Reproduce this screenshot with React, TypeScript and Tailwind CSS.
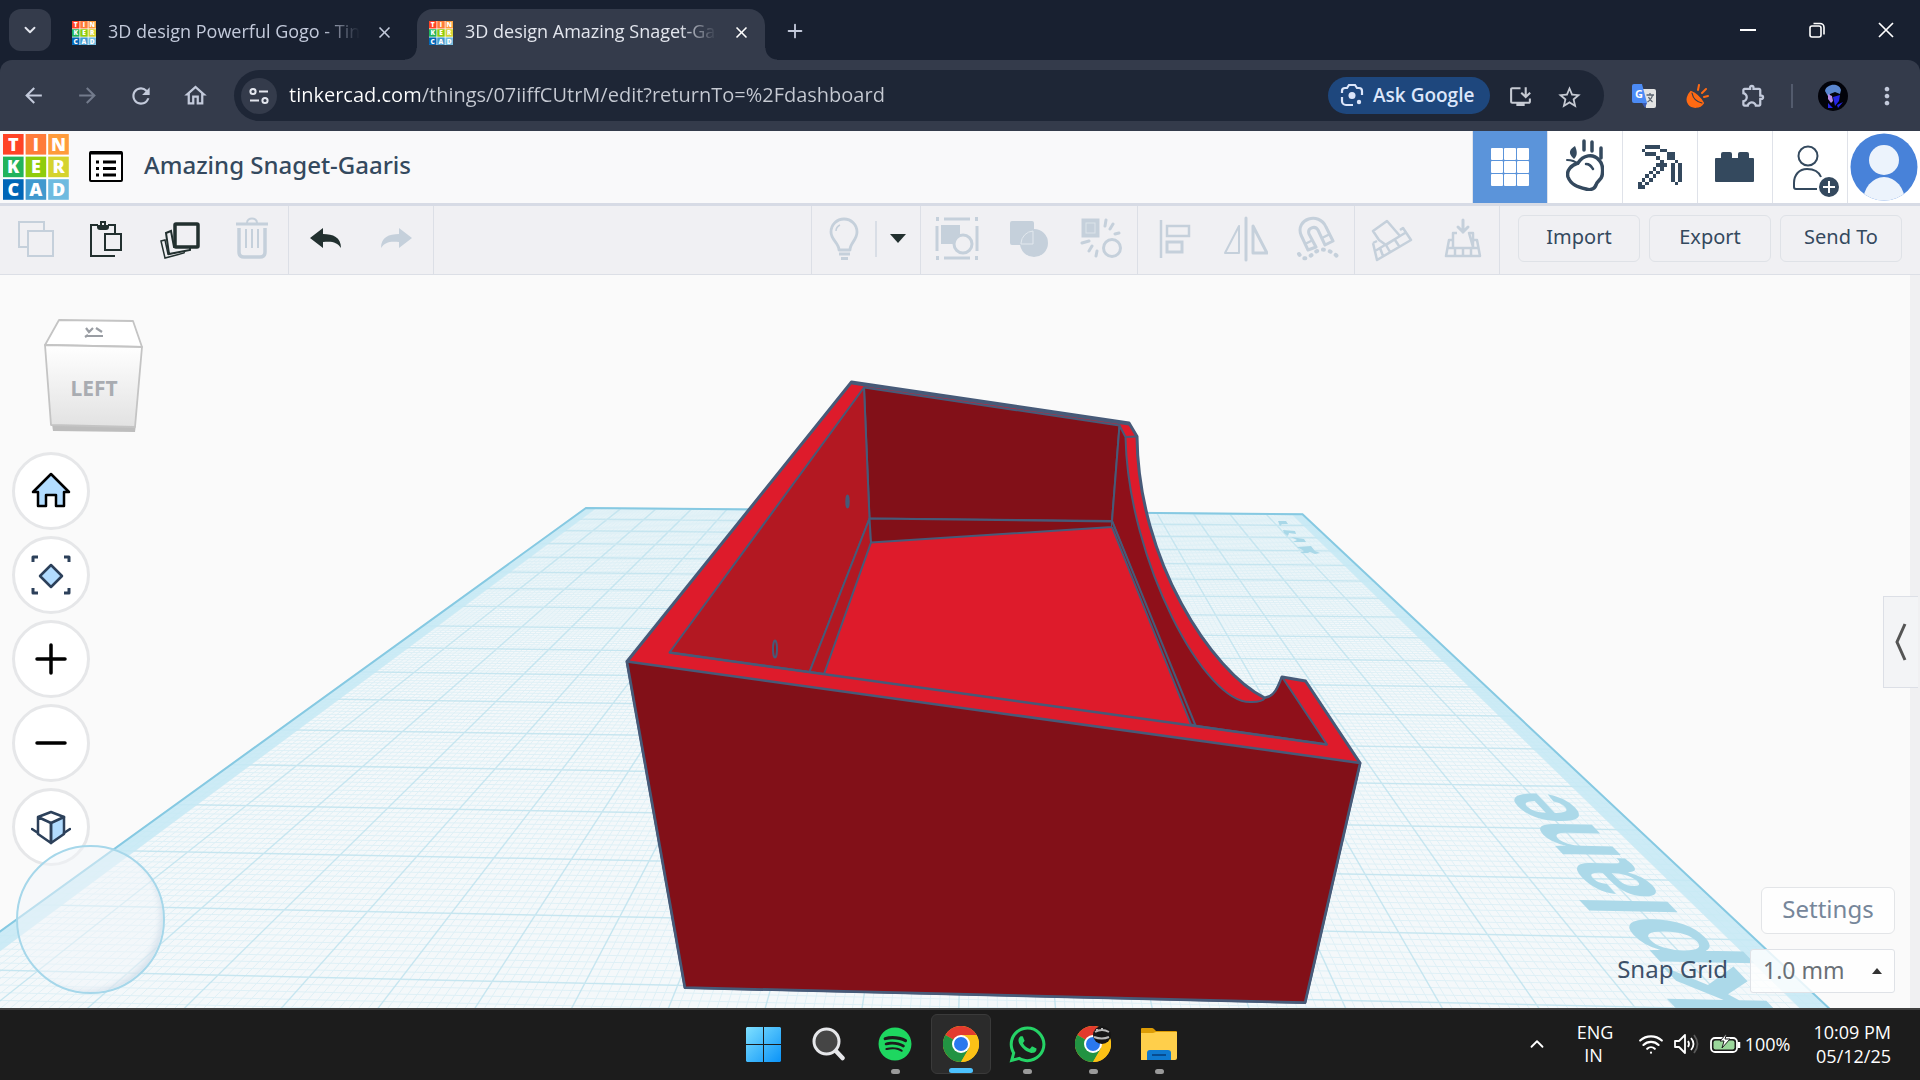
import type { ReactNode } from "react";
import { FaSpotify, FaWhatsapp } from "react-icons/fa";
import {
  MdArrowBack,
  MdArrowForward,
  MdClose,
  MdMoreVert,
  MdOutlineExtension,
  MdOutlineHome,
  MdOutlineInstallDesktop,
  MdRefresh,
  MdStarOutline,
} from "react-icons/md";
import { ChevronDown, ChevronUp, Plus, Wifi } from "lucide-react";

/* ---------- shared bits ---------- */

const LOGO = [
  ["T", "#ff4326"], ["I", "#ff7b3a"], ["N", "#ff9b3b"],
  ["K", "#21b35b"], ["E", "#8fcc0b"], ["R", "#d5d32e"],
  ["C", "#0066b7"], ["A", "#4199ce"], ["D", "#6fbbe0"],
];

function TinkerLogo({ className }: { className?: string }) {
  return (
    <svg viewBox="0 0 66 66" className={`overflow-visible ${className}`} role="img" aria-label="Tinkercad">
      <rect width="66" height="66" fill="#fff" />
      {LOGO.map(([letter, color], i) => {
        const x = (i % 3) * 22.6;
        const y = Math.floor(i / 3) * 22.6;
        return (
          <g key={letter}>
            <rect x={x} y={y} width="20.6" height="20.6" fill={color} />
            <text x={x + 10.3} y={y + 16.8} textAnchor="middle" fontSize="18" fontWeight="800" fontFamily="Open Sans, sans-serif" fill="#fff">
              {letter}
            </text>
          </g>
        );
      })}
    </svg>
  );
}

function IconButton({ label, className, children }: { label: string; className: string; children: ReactNode }) {
  return (
    <button type="button" aria-label={label} className={`grid shrink-0 place-items-center ${className}`}>
      {children}
    </button>
  );
}

/* ---------- browser chrome ---------- */

function Tab({ title, active }: { title: string; active?: boolean }) {
  return (
    <div className={`relative flex h-[51px] items-center pb-1 ${active ? "w-[348px] rounded-t-2xl bg-[#343b4b] pl-3" : "w-[344px] pl-[10px]"}`}>
      {active && (
        <>
          <span className="absolute bottom-0 -left-3 h-3 w-3 bg-[radial-gradient(circle_at_0_0,transparent_11px,#343b4b_12px)]" />
          <span className="absolute -right-3 bottom-0 h-3 w-3 bg-[radial-gradient(circle_at_100%_0,transparent_11px,#343b4b_12px)]" />
        </>
      )}
      <TinkerLogo className="h-6 w-6 shrink-0" />
      <span className={`ml-3 w-[252px] overflow-hidden pb-1 text-[18px] leading-7 whitespace-nowrap mask-r-from-85% ${active ? "text-[#e3e6ee]" : "text-[#c3cadb]"}`}>
        {title}
      </span>
      <IconButton label={`Close ${title}`} className={`ml-3 h-6 w-6 ${active ? "text-white" : "text-[#c3cadb]"}`}>
        <MdClose size={19} />
      </IconButton>
    </div>
  );
}

function TabStrip() {
  return (
    <div className="flex h-[60px] items-end bg-[#182030]">
      <IconButton label="Search tabs" className="mb-[9px] ml-[9px] h-[42px] w-[42px] rounded-xl bg-[#343b4b] text-[#e3e6ee]">
        <ChevronDown size={18} strokeWidth={2.5} />
      </IconButton>
      <div className="ml-[11px] flex gap-[11px]">
        <Tab title="3D design Powerful Gogo - Tinkercad" />
        <Tab title="3D design Amazing Snaget-Gaaris" active />
      </div>
      <IconButton label="New tab" className="ml-[18px] h-[51px] w-6 pb-2 text-[#c3cadb]">
        <Plus size={22} />
      </IconButton>
      <div className="ml-auto flex h-full text-white">
        <IconButton label="Minimize" className="w-[69px]">
          <svg viewBox="0 0 16 16" className="h-4 w-4"><path d="M0 8h16" stroke="currentColor" strokeWidth="2" /></svg>
        </IconButton>
        <IconButton label="Restore" className="w-[69px]">
          <svg viewBox="0 0 16 16" className="h-4 w-4" fill="none" stroke="currentColor" strokeWidth="1.6">
            <rect x="1" y="4" width="11" height="11" rx="2" />
            <path d="M4.500 1.500H11a4 4 0 0 1 4 4v7" />
          </svg>
        </IconButton>
        <IconButton label="Close" className="w-[69px]">
          <svg viewBox="0 0 16 16" className="h-4 w-4"><path d="M1 1l14 14M15 1L1 15" stroke="currentColor" strokeWidth="1.7" /></svg>
        </IconButton>
      </div>
    </div>
  );
}

function AddressBar() {
  return (
    <div className="flex h-[71px] items-center bg-[#182030]">
      <div className="flex h-full w-full items-center rounded-t-xl bg-[#343b4b] pr-[19px] pl-[6px]">
        <div className="flex text-[#c3cadb]">
          <IconButton label="Back" className="h-9 w-[54px]"><MdArrowBack size={25} /></IconButton>
          <IconButton label="Forward" className="h-9 w-[54px] text-[#737b8c]"><MdArrowForward size={25} /></IconButton>
          <IconButton label="Reload" className="h-9 w-[54px]"><MdRefresh size={26} /></IconButton>
          <IconButton label="Home" className="h-9 w-[54px]"><MdOutlineHome size={27} /></IconButton>
        </div>
        <div className="ml-3 flex h-[51px] flex-1 items-center rounded-full bg-[#1e2636] pr-6 pl-[7px]">
          <IconButton label="View site information" className="h-9 w-9 rounded-full bg-[#343b4b] text-[#e3e6ee]">
            <svg viewBox="0 0 20 20" className="h-5 w-5" fill="none" stroke="currentColor" strokeWidth="2">
              <circle cx="4" cy="5.500" r="2.600" />
              <path d="M10 5.500h9M1 14.500h9" />
              <circle cx="16" cy="14.500" r="2.600" />
            </svg>
          </IconButton>
          <input
            aria-label="Address and search bar"
            defaultValue="tinkercad.com/things/07iiffCUtrM/edit?returnTo=%2Fdashboard"
            className="ml-3 min-w-0 flex-1 bg-[linear-gradient(90deg,#ffffff_131px,#c6cad3_131px)] bg-clip-text pb-[2px] text-[20px] leading-7 text-transparent outline-none"
          />
          <button type="button" className="flex h-[37px] w-[162px] items-center gap-[9px] rounded-full bg-[#1e477d] pb-px pl-3 text-[19px] font-semibold whitespace-nowrap text-[#dce6fa]">
            <svg viewBox="0 0 24 24" className="h-6 w-6 shrink-0" fill="none" stroke="currentColor" strokeWidth="2.200">
              <path d="M2 10V8a3 3 0 0 1 3-3h2l2-3h6l2 3h2a3 3 0 0 1 3 3v4M2 14v4a4 4 0 0 0 4 4h7" />
              <circle cx="12" cy="12.500" r="3.500" fill="currentColor" stroke="none" />
              <circle cx="19" cy="19" r="2.200" fill="currentColor" stroke="none" />
            </svg>
            Ask Google
          </button>
          <div className="ml-[18px] flex gap-6 text-[#c6cad3]">
            <IconButton label="Install app" className="h-6 w-6"><MdOutlineInstallDesktop size={25} /></IconButton>
            <IconButton label="Bookmark this tab" className="h-6 w-6"><MdStarOutline size={27} /></IconButton>
          </div>
        </div>
        <IconButton label="Translate" className="ml-7 h-6 w-6">
          <svg viewBox="0 0 24 24" className="h-6 w-6 overflow-visible">
            <path d="M9 5h13a2 2 0 0 1 2 2v15a2 2 0 0 1-2 2h-8z" fill="#e3e3e3" />
            <path d="M2 0h8l5 19H2a2 2 0 0 1-2-2V2a2 2 0 0 1 2-2z" fill="#4c8bf5" />
            <path d="M10 19h5l-2 5z" fill="#3a5bb5" />
            <path d="M14.500 11H22M18 9v2m2.500 0c-.5 3-2 5-5 7m1-5c1 2 2 3.500 4 5" stroke="#5b6470" strokeWidth="1.300" fill="none" />
            <text x="7" y="14" textAnchor="middle" fontSize="11" fontWeight="700" fontFamily="Open Sans, sans-serif" fill="#fff">G</text>
          </svg>
        </IconButton>
        <IconButton label="Extension" className="ml-[30px] h-6 w-6">
          <svg viewBox="0 0 24 24" className="h-6 w-6" fill="none" stroke="#ff6a13" strokeLinecap="round" strokeWidth="2">
            <path d="M5 8c5 2 9 6 12 11-3 5-11 5-14 1S2 11 5 8z" fill="#ff6a13" />
            <path d="M6 9c1 5 5 9 10 10" stroke="#343b4b" strokeWidth="1.200" />
            <path d="M12 6l1-5M16 9l4-4M18 13l4-1" />
          </svg>
        </IconButton>
        <IconButton label="Extensions" className="ml-[29px] h-7 w-7 text-[#c3cadb]"><MdOutlineExtension size={27} /></IconButton>
        <span className="ml-6 h-6 w-[2px] shrink-0 bg-[#535b6d]" />
        <IconButton label="Profile" className="ml-6 h-8 w-8">
          <svg viewBox="0 0 32 32" className="h-8 w-8">
            <circle cx="16" cy="16" r="15" fill="#02030a" />
            <path d="M8 11c1-7 14-9 16-1l-1 4-5-2-5 2-1 4z" fill="#5a86cf" />
            <path d="M11 14l4 2 1 5-2 2-3-4z" fill="#b58ae6" />
            <path d="M16 17l7-2-1 6-4 5zM11 23l5 5h-5zM20 25l6-3-5 6z" fill="#2526e6" />
          </svg>
        </IconButton>
        <IconButton label="Chrome menu" className="ml-6 h-7 w-7 text-[#c3cadb]"><MdMoreVert size={28} /></IconButton>
      </div>
    </div>
  );
}

/* ---------- editor header ---------- */

const PICKAXE = [
  "..####......",
  ".#....##....",
  "..###...##..",
  ".....#..##..",
  "......#...#.",
  ".....###.#.#",
  "....#.#..#.#",
  "...#.#...#.#",
  "..#.#....#.#",
  ".#.#.....#.#",
  "#.#.......#.",
  "##..........",
];

function EditorHeader() {
  const cell = "w-[75px] border-l border-[#dfe2e9] bg-white text-[#34495e]";
  return (
    <header className="relative z-10 flex h-[72px] shrink-0 items-stretch bg-[#f9f9fa] shadow-[0_3px_0_#d7dbe5]">
      <a href="#home" className="ml-[3px] self-center"><TinkerLogo className="h-[66px] w-[66px]" /></a>
      <IconButton label="Design list" className="ml-5 w-[34px] pb-[2px]">
        <svg viewBox="0 0 34 31" className="h-[31px] w-[34px]">
          <rect x="1" y="1" width="32" height="29" rx="1" fill="#fff" stroke="#000" strokeWidth="2" />
          <path d="M1 2h32M7 11h3m4 0h13M7 17.500h3m4 0h13M7 24h3m4 0h13" stroke="#000" strokeWidth="3" />
        </svg>
      </IconButton>
      <h1 className="ml-[21px] self-center pb-1 font-[Noto_Sans] text-[24px] font-medium text-[#34495e]">Amazing Snaget-Gaaris</h1>
      <nav className="ml-auto flex" aria-label="Workspaces">
        <IconButton label="3D design" className="w-[75px] border-l border-[#dfe2e9] bg-[#5b94da]">
          <svg viewBox="0 0 38 38" className="h-[38px] w-[38px]" fill="#fff">
            {[0, 13, 26].map((y) => [0, 13, 26].map((x) => <rect key={`${x}-${y}`} x={x} y={y} width="12" height="12" rx="1" />))}
          </svg>
        </IconButton>
        <IconButton label="Sim lab" className={`${cell} pb-1`}>
          <svg viewBox="0 0 38 52" className="h-[52px] w-[38px]" fill="none" stroke="currentColor" strokeLinecap="round" strokeWidth="3.500">
            <path d="M12 24c5-8 15-10 21-3 4 4 4 11 3 16-1 4-5 5-6 9-2 5-7 5-10 4C12 48 5 46 2 38c-2-6 3-12 10-14z" />
            <path d="M20 25c4 0 5 2 7 5" strokeWidth="2.500" />
            <path d="M18 2v9M26 3v9M35 9v10" />
            <path d="M1 21c5 0 8 1 11 4" strokeWidth="2" />
            <path d="M8 20C1 14 4 10 9 7c2 5 3 9-1 13z" fill="currentColor" stroke="none" />
          </svg>
        </IconButton>
        <IconButton label="Blocks" className={cell}>
          <svg viewBox="0 0 12 12" className="h-11 w-11" fill="currentColor" shapeRendering="crispEdges">
            {PICKAXE.map((row, y) => [...row].map((c, x) => c === "#" && <rect key={`${x}-${y}`} x={x} y={y} width="1" height="1" />))}
          </svg>
        </IconButton>
        <IconButton label="Bricks" className={cell}>
          <svg viewBox="0 0 40 30" className="h-[30px] w-10" fill="currentColor">
            <path d="M0 7q0-1 1-1h5V2q0-2 2-2h7q2 0 2 2v4h6V2q0-2 2-2h7q2 0 2 2v4h4q1 0 1 1v22q0 1-1 1H1q-1 0-1-1z" />
          </svg>
        </IconButton>
        <IconButton label="Invite people" className={`${cell} pt-2 pl-3`}>
          <svg viewBox="0 0 48 54" className="h-[54px] w-12" fill="none" stroke="currentColor" strokeWidth="2">
            <circle cx="16" cy="12" r="9.500" />
            <path d="M25 45H4q-2 0-2-2v-4c0-8 5-14 13-14 7 0 12 3 14 8" />
            <circle cx="37" cy="43" r="10" fill="currentColor" stroke="none" />
            <path d="M37 37v12M31 43h12" stroke="#fff" />
          </svg>
        </IconButton>
        <IconButton label="Account" className="w-[73px] border-l border-[#dfe2e9] bg-white">
          <svg viewBox="0 0 68 68" className="h-[68px] w-[68px]">
            <clipPath id="avatar"><circle cx="34" cy="34" r="33.500" /></clipPath>
            <g clipPath="url(#avatar)">
              <rect width="68" height="68" fill="#4882d9" />
              <circle cx="34" cy="27" r="15" fill="#ecf3fc" />
              <ellipse cx="34" cy="69" rx="21" ry="25" fill="#ecf3fc" />
            </g>
          </svg>
        </IconButton>
      </nav>
    </header>
  );
}

/* ---------- toolbar ---------- */

const DARK = "#22302f";
const PALE = "#c5d0db";

function Tool({ label, children }: { label: string; children: ReactNode }) {
  return (
    <IconButton label={label} className="h-full w-[72px]">
      <svg viewBox="0 0 44 46" className="h-[46px] w-11" fill="none" stroke={PALE} strokeWidth="2">
        {children}
      </svg>
    </IconButton>
  );
}

function Toolbar() {
  const group = "flex h-full items-center border-r border-[#dcdfe6]";
  const action = "h-[47px] w-[122px] rounded-md border border-[#dfe2e7] pb-1 font-[Noto_Sans] text-[20px] text-[#34495e]";
  return (
    <div className="flex h-[72px] shrink-0 items-center border-b border-[#dcdfe6] bg-[#f0f0f3]">
      <div className={group}>
        <Tool label="Copy">
          <path d="M13 31H5V6h25v8" />
          <rect x="14" y="15" width="25" height="25" />
        </Tool>
        <Tool label="Paste">
          <path d="M29 40H5V9h7m10 0h7v9" stroke={DARK} />
          <path d="M11 9h12v2q0 3-3 3h-6q-3 0-3-3z" fill={DARK} stroke="none" />
          <rect x="15" y="6" width="4" height="4" stroke={DARK} fill="#f0f0f3" />
          <rect x="19" y="18" width="16" height="16" stroke={DARK} fill="#f0f0f3" />
        </Tool>
        <Tool label="Duplicate">
          <g stroke={DARK} fill="#f0f0f3">
            <path d="M3 25l4-1 3 14 17-4-1 3-19 5z" strokeWidth="1.500" />
            <path d="M8 17l5-2 3 16 16-1v4l-21 4z" />
            <rect x="17" y="8" width="23" height="23" rx="1" strokeWidth="3.500" />
          </g>
        </Tool>
        <Tool label="Delete">
          <path d="M6 8h32" strokeWidth="3" />
          <path d="M17 7c0-6 10-6 10 0" />
          <path d="M9 12v24q0 5 5 5h16q5 0 5-5V12" strokeWidth="3.500" />
          <path d="M16 13v19m6-19v19m6-19v19" />
        </Tool>
      </div>
      <div className={group}>
        <Tool label="Undo">
          <path d="M7 22L20 12v6c10 0 18 3 18 14-4-6-9-7-18-6v6z" fill={DARK} stroke="none" />
        </Tool>
        <Tool label="Redo">
          <path d="M37 22L24 12v6C14 18 6 21 6 32c4-6 9-7 18-6v6z" fill={PALE} stroke="none" />
        </Tool>
      </div>
      <div className={`${group} ml-auto w-[110px] border-l`}>
        <IconButton label="Visibility" className="ml-4 h-full w-8">
          <svg viewBox="0 0 32 46" className="h-[46px] w-8" fill="none" stroke={PALE} strokeWidth="2.800">
            <path d="M11 34c0-7-8-10-8-18a13 13 0 0 1 26 0c0 8-7 11-7 18z" strokeLinejoin="round" />
            <path d="M8 15c0-3 2-5 4-6" strokeWidth="1.500" />
            <path d="M11 38h11M13 42.500h7" />
          </svg>
        </IconButton>
        <span className="ml-[15px] h-9 w-[2px] bg-[#d9dee6]" />
        <IconButton label="Visibility options" className="ml-[7px] h-full w-7">
          <svg viewBox="0 0 16 9" className="h-[9px] w-4" fill={DARK}><path d="M0 0h16L8 9z" /></svg>
        </IconButton>
      </div>
      <div className={group}>
        <Tool label="Group">
          <path d="M9 3h26M9 42h26M2 10v25M42 10v25" strokeWidth="3" />
          <path d="M1 3h3m36 0h3M1 42h3m36 0h3" strokeWidth="4" />
          <rect x="7" y="10" width="17" height="17" fill={PALE} />
          <circle cx="28" cy="28" r="9" fill="#f0f0f3" strokeWidth="3" />
        </Tool>
        <Tool label="Union">
          <rect x="4" y="6" width="22" height="22" rx="1" fill={PALE} />
          <circle cx="27" cy="27" r="13" fill={PALE} />
          <path d="M14 27a13 13 0 0 1 12-12v13H14z" stroke="#e2e8ee" strokeWidth="1" />
        </Tool>
        <Tool label="Ungroup">
          <rect x="4" y="4" width="15" height="16" fill={PALE} strokeWidth="3" />
          <rect x="7" y="7" width="9" height="10" stroke="#dce3ea" strokeWidth="1" />
          <circle cx="33" cy="32" r="8.500" strokeWidth="3" />
          <path d="M27 4l-1 6m8-2l-3 5m9 4l-4 1M3 27l7-2m3 5l-3 5m8 0l-1 5" strokeWidth="3" strokeLinecap="round" />
        </Tool>
      </div>
      <div className={group}>
        <Tool label="Align">
          <path d="M9 4v38" strokeWidth="2.500" />
          <rect x="15" y="10" width="22" height="10" strokeWidth="2.500" />
          <rect x="15" y="26" width="15" height="10" strokeWidth="3" />
        </Tool>
        <Tool label="Mirror">
          <path d="M22 2v42" strokeWidth="3" strokeLinecap="round" />
          <path d="M15 10v27H1z" strokeLinejoin="round" />
          <path d="M29 10v27h14z" strokeWidth="3" strokeLinejoin="round" />
        </Tool>
        <Tool label="Cruise">
          <path d="M12 34L5 19C-1 3 23-5 30 11l7 14-8 4-7-15c-3-5-11-2-9 4l7 13z" strokeWidth="3" strokeLinejoin="round" />
          <path d="M9 28l8-4M26 22l8-4" strokeWidth="2.500" />
          <path d="M3 38c5 8 10 3 15-1s12-6 23 3" strokeWidth="4" strokeLinecap="round" strokeDasharray="1 6" />
        </Tool>
      </div>
      <div className={group}>
        <Tool label="Workplane">
          <path d="M4 15L18 5l13 15-14 9-7-5zM4 27l4-2M31 14l3-2 8 12-34 20-4-17M6 35l30-18M17 29l4 7m5-12l4 6M11 32l3 8" strokeWidth="2.500" strokeLinejoin="round" />
        </Tool>
        <Tool label="Drop to workplane">
          <path d="M22 4v12m-5-5l5 5 5-5" strokeWidth="3" strokeLinecap="round" />
          <path d="M12 31V17h4m12 0h4v14zM12 24H8L5 40h34l-3-16h-4M7 32h30M14 32v8m8-8v8m8-8v8" strokeWidth="2.500" strokeLinejoin="round" />
        </Tool>
      </div>
      <div className="flex gap-[9px] px-[18px]">
        <button type="button" className={action}>Import</button>
        <button type="button" className={action}>Export</button>
        <button type="button" className={action}>Send To</button>
      </div>
    </div>
  );
}

/* ---------- 3D scene ---------- */

// Unit square -> screen quad. Scene units are grid cells (10 mm), u across, k towards the viewer.
const [P0, P1, P2, P3] = [[586, 508], [1302.5, 514.3], [1832.4, 1011.4], [-51.8, 969]];
const DX1 = P1[0] - P2[0], DX2 = P3[0] - P2[0], DX3 = P0[0] - P1[0] + P2[0] - P3[0];
const DY1 = P1[1] - P2[1], DY2 = P3[1] - P2[1], DY3 = P0[1] - P1[1] + P2[1] - P3[1];
const DET = DX1 * DY2 - DX2 * DY1;
const G = (DX3 * DY2 - DX2 * DY3) / DET;
const H = (DX1 * DY3 - DX3 * DY1) / DET;

function project(u: number, k: number) {
  const s = u / 20;
  const t = k / 17;
  const w = G * s + H * t + 1;
  return [
    ((P1[0] - P0[0] + G * P1[0]) * s + (P3[0] - P0[0] + H * P3[0]) * t + P0[0]) / w,
    ((P1[1] - P0[1] + G * P1[1]) * s + (P3[1] - P0[1] + H * P3[1]) * t + P0[1]) / w,
  ];
}

const pt = (u: number, k: number) => project(u, k).map((n) => n.toFixed(1)).join(" ");
const poly = (...pts: number[][]) => `M${pts.map(([u, k]) => pt(u, k)).join("L")}Z`;
const NEAR = 19.5;

const range = (n: number) => Array.from({ length: n }, (_, i) => i);
const gridPath = (step: number, cols: number, rows: number) =>
  range(cols).map((i) => `M${pt(i * step, 0)}L${pt(i * step, NEAR)}`).join("") +
  range(rows).map((i) => `M${pt(0, i * step)}L${pt(20, i * step)}`).join("");

const MINOR = gridPath(0.1, 200, 195);
const MAJOR = gridPath(1, 20, 20);

// letter, pen position along the edge, advance in em
const LABEL: [string, number, number][] = [
  ["k", 17.14, 0.556], ["p", 16.44, 0.611], ["l", 15.66, 0.278],
  ["a", 15.34, 0.556], ["n", 14.62, 0.611], ["e", 13.88, 0.556],
];

function PlaneLetter({ char, k, advance }: { char: string; k: number; advance: number }) {
  const em = 1.32;
  const u = 19.42;
  const [ox, oy] = project(u, k);
  const mid = k - (advance * em) / 2;
  const [ax, ay] = project(u - 0.35, mid + 0.25);
  const [bx, by] = project(u - 0.35, mid - 0.25);
  const [cx, cy] = project(u - 0.7, mid);
  const [dx, dy] = project(u, mid);
  const a = ((bx - ax) / 0.5) * em, b = ((by - ay) / 0.5) * em;
  const c = ((dx - cx) / 0.7) * 1.42, d = ((dy - cy) / 0.7) * 1.42;
  const m = [a, b, c, d].map((n) => n / 100);
  return (
    <text transform={`matrix(${m.join(" ")} ${ox} ${oy})`} fontSize="100" fontWeight="700" fontFamily="Liberation Sans, sans-serif" fill="#acd9e9">
      {char}
    </text>
  );
}

function Scene() {
  return (
    <svg viewBox="0 275 1920 733" preserveAspectRatio="xMidYMid slice" className="absolute inset-0 h-full w-full" aria-hidden>
      <path d={poly([0, 0], [20, 0], [20, NEAR], [0, NEAR])} fill="#f4f8fa" />
      <path d={MINOR} stroke="#a9dcec" strokeWidth="1" opacity=".28" />
      <path d={MAJOR} stroke="#a3d6e6" strokeWidth="1.500" opacity=".42" fill="none" />
      <path d={poly([0, 0], [0.3, 0.1], [0.3, NEAR], [0, NEAR])} fill="#c6e9f4" opacity=".85" />
      <path d={poly([20, 0], [19.7, 0.1], [19.7, NEAR], [20, NEAR])} fill="#c6e9f4" opacity=".85" />
      <path d={poly([0, 0], [20, 0], [19.7, 0.1], [0.3, 0.1])} fill="#c6e9f4" />
      <path d={poly([0, 0], [20, 0], [20, NEAR], [0, NEAR])} fill="none" stroke="#86c9e2" strokeWidth="2" />
      {LABEL.map(([char, k, advance]) => (
        <PlaneLetter key={char} char={char} k={k} advance={advance} />
      ))}
      <path d="M1278 521h8l2 3h-6l-2 2zM1283 530l12 1 1 3-7-1-1 3-4-3zM1291 537l13 2 2 3h-13l4-2zM1297 547l14-1 4 5 5 2-5 1-5-2-2 1h-8l4-2z" fill="#a9d8e8" />

      <g stroke="#475a78" strokeWidth="2" strokeLinejoin="round">
        <path d="M627 661.500L851.500 382L1129 423L1137 436.500C1138 560 1212 672 1264.800 698C1274 697 1278 688 1282 677L1305.500 681L1360 763L1305 1002.500L685 987.500z" fill="#de1b2b" strokeWidth="3" />
        <path d="M864 387.500L1119.500 425.500L1112 521L869.500 518.500z" fill="#821018" />
        <path d="M864 387.500L669.500 652.500L809.500 672L869.500 518.500z" fill="#b31822" />
        <path d="M869.500 518.500L871 542.500L824 674L809.500 672z" fill="#b31822" />
        <path d="M869.500 518.500L1112 521.500V527L871 542.500z" fill="#821018" />
        <path d="M1119.500 425.500L1125.500 437C1128 560 1205 706 1252 702C1260 702 1263 701 1265 698C1274 697 1278 688 1282 677L1327 744.500L1194 725.500L1112 521z" fill="#8f101a" />
        <path d="M1112 527L1191 724.500L1195.500 725.500L1112 521" fill="#8f101a" />
        <path d="M1125.500 437L1137 436.500" fill="none" />
        <path d="M669.500 652.500L1327 744.500" fill="none" strokeWidth="2.500" />
        <path d="M627 661.500L1360 763L1305 1002.500L685 987.500z" fill="#821018" strokeWidth="2.500" />
        <path d="M852 383L1129 424" fill="none" strokeWidth="3" />
        <ellipse cx="847.500" cy="501.500" rx="1.200" ry="6" fill="#475a78" />
        <ellipse cx="775" cy="649" rx="2" ry="8.500" fill="#a01620" />
      </g>
    </svg>
  );
}

function ViewCube() {
  return (
    <svg viewBox="0 0 104 116" className="ml-10 h-[116px] w-[104px]" role="img" aria-label="View cube">
      <defs>
        <linearGradient id="face" x1="0" y1="0" x2="0" y2="1">
          <stop offset="0" stopColor="#fff" />
          <stop offset="1" stopColor="#e2e2e2" />
        </linearGradient>
      </defs>
      <path d="M12 106h84l-1 8-82-1z" fill="#bdbdbd" />
      <g stroke="#c4c4c4" strokeWidth="1.800" strokeLinejoin="round">
        <path d="M19 2l74 1 9 26-97-2z" fill="#fff" />
        <path d="M5 27l97 2-7 80-84-2z" fill="url(#face)" />
      </g>
      <path d="M46 18h17M45 19l3-2M46 10l3 4 4-4m3 0l6 4" stroke="#999da3" strokeWidth="2.200" fill="none" />
      <text x="54" y="78" textAnchor="middle" fontSize="21" fontWeight="700" fontFamily="Noto Sans, sans-serif" fill="#a9acb1">LEFT</text>
    </svg>
  );
}

function ViewButton({ label, children }: { label: string; children: ReactNode }) {
  return (
    <IconButton label={label} className="h-[78px] w-[78px] rounded-full border-[3px] border-[#e6e7e9] bg-white">
      <svg viewBox="0 0 40 40" className="h-10 w-10" fill="none" stroke="#2c405a" strokeWidth="2.500" strokeLinecap="round" strokeLinejoin="round">
        {children}
      </svg>
    </IconButton>
  );
}

function Viewport() {
  return (
    <main className="relative flex min-h-0 flex-1 justify-between overflow-hidden bg-[#fafafa] font-[Noto_Sans]">
      <Scene />
      <div className="relative flex flex-col pt-[43px]">
        <ViewCube />
        <div className="mt-[18px] ml-3 flex flex-col gap-[6px]">
          <ViewButton label="Home view">
            <path d="M20 3L2 21h5v14h8V24h10v11h8V21h5z" fill="#b2dcff" stroke="#000" />
          </ViewButton>
          <ViewButton label="Fit all in view">
            <path d="M20 10l11 11-11 11L9 21z" fill="#b2dcff" />
            <path d="M2 7V2h5M33 2h5v5M38 33v5h-5M7 38H2v-5" strokeWidth="3" strokeLinecap="butt" />
          </ViewButton>
          <ViewButton label="Zoom in"><path d="M6 20h28M20 6v28" stroke="#000" strokeWidth="3.500" /></ViewButton>
          <ViewButton label="Zoom out"><path d="M6 20h28" stroke="#000" strokeWidth="3.500" /></ViewButton>
          <ViewButton label="Orthographic view">
            <path d="M20 16l13-6v17l-13 9z" fill="#b2dcff" />
            <path d="M20 16L7 10l13-5 13 5M7 10v17l13 9V16M1 22l6 4m26 0l6-4" />
          </ViewButton>
        </div>
      </div>
      {/* orbit pad */}
      <div className="absolute bottom-[14px] left-4 h-[149px] w-[149px] rounded-full border-2 border-[#a6d7ea] bg-[#f1f6f9]/50 shadow-[inset_-7px_-5px_5px_-4px_#cfdde8aa]" />

      <aside className="relative flex w-[310px] flex-col items-end">
        <div className="absolute inset-y-0 right-0 w-[10px] bg-[#f0f0f2]" />
        <button type="button" aria-label="Show shapes panel" className="relative mt-[321px] mr-[2px] grid h-[92px] w-[35px] place-items-center border border-r-0 border-[#dcdfe6] bg-[#f3f4f6]">
          <svg viewBox="0 0 12 38" className="h-[38px] w-3" fill="none" stroke="#555" strokeWidth="3"><path d="M10 1L2 19l8 18" /></svg>
        </button>
        <button type="button" className="relative mt-auto mr-[25px] h-[47px] w-[134px] rounded-md border border-[#e3e5e8] bg-white/80 pb-1 text-[24px] leading-8 text-[#76869a]">
          Settings
        </button>
        <div className="relative mt-[15px] mr-[25px] mb-[15px] flex items-center">
          <label htmlFor="snap" className="mr-[22px] pb-1 text-[24px] leading-8 text-[#3d5068]">Snap Grid</label>
          <select id="snap" className="h-11 w-[145px] appearance-none rounded-[3px] border border-[#dfe2e7] bg-white/80 pb-[2px] pl-3 text-[23px] text-[#6a7076]">
            <option>1.0 mm</option>
          </select>
          <svg viewBox="0 0 10 6" className="pointer-events-none absolute right-[13px] h-[6px] w-[10px]" fill="#333"><path d="M5 0l5 6H0z" /></svg>
        </div>
      </aside>
    </main>
  );
}

/* ---------- taskbar ---------- */

function ChromeMark({ badge }: { badge?: boolean }) {
  return (
    <svg viewBox="0 0 36 36" className="h-9 w-9">
      <circle cx="18" cy="18" r="18" fill="#fbc116" />
      <path d="M18 18L2.400 9A18 18 0 0 1 33.600 9z" fill="#e33b2e" />
      <path d="M18 9h15.600L26 22.500z" fill="#fbc116" />
      <path d="M2.400 9A18 18 0 0 0 18 36l8-13.500-8-4.500z" fill="#229342" />
      <path d="M25.800 22.500L18 36a18 18 0 0 0 15.600-27H18z" fill="#fbc116" />
      <circle cx="18" cy="18" r="9" fill="#fff" />
      <circle cx="18" cy="18" r="7" fill="#2a78ee" />
      {badge && (
        <>
          <circle cx="27" cy="9" r="9" fill="#161616" />
          <path d="M20 6q7-4 14 0M19 11q8 3 15 0M22 3v3m5-4v3" stroke="#b9b9b9" strokeWidth="2" fill="none" />
        </>
      )}
    </svg>
  );
}

function TaskIcon({ label, running, active, children }: { label: string; running?: boolean; active?: boolean; children: ReactNode }) {
  return (
    <button
      type="button"
      aria-label={label}
      className={`relative grid h-[60px] w-[60px] place-items-center rounded-md ${active ? "border border-[#3a3a3a] bg-[#2b2b2b]" : ""}`}
    >
      {children}
      {(running || active) && (
        <span className={`absolute bottom-0 h-[5px] rounded-full ${active ? "w-6 bg-[#4cc2ff]" : "w-[9px] bg-[#9a9a9a]"}`} />
      )}
    </button>
  );
}

function Taskbar() {
  return (
    <footer className="grid h-[72px] shrink-0 grid-cols-[1fr_auto_1fr] items-center border-t-2 border-[#3f3f3f] bg-[#1c1c1c] pb-[2px] text-[18px] leading-6 text-white">
      <div />
      <div className="flex gap-[6px] pl-[2px]">
        <TaskIcon label="Start">
          <svg viewBox="0 0 35 35" className="h-[35px] w-[35px]">
            <linearGradient id="win" x1="0" y1="0" x2="1" y2="1">
              <stop offset="0" stopColor="#7fe0ff" />
              <stop offset="1" stopColor="#0a93f8" />
            </linearGradient>
            <path d="M1 0h16v17H0V1zM18 0h16l1 1v16H18zM0 18h17v17H1l-1-1zM18 18h17v16l-1 1H18z" fill="url(#win)" />
          </svg>
        </TaskIcon>
        <TaskIcon label="Search">
          <svg viewBox="0 0 34 34" className="h-[34px] w-[34px]" stroke="#e6e7ea" strokeLinecap="round">
            <path d="M23 23l7.500 8" strokeWidth="4.500" />
            <circle cx="14.500" cy="14.500" r="12.500" fill="#454545" strokeWidth="3" />
          </svg>
        </TaskIcon>
        <TaskIcon label="Spotify" running><FaSpotify size={34} color="#1ed760" /></TaskIcon>
        <TaskIcon label="Google Chrome" active><ChromeMark /></TaskIcon>
        <TaskIcon label="WhatsApp" running><FaWhatsapp size={41} color="#25d366" /></TaskIcon>
        <TaskIcon label="Google Chrome, second profile" running><ChromeMark badge /></TaskIcon>
        <TaskIcon label="File Explorer" running>
          <svg viewBox="0 0 36 32" className="h-8 w-9">
            <path d="M0 10V1q0-1 1-1h10q1 0 2 1l2 2h20q1 0 1 1v6z" fill="#dd9c05" />
            <path d="M0 5h12l3-1h21v26q0 2-2 2H0z" fill="#ffcf4b" />
            <path d="M6 32v-7q0-3 3-3h18q3 0 3 3v7z" fill="#0f79cf" />
            <path d="M11 27h14" stroke="#074b8f" strokeWidth="2" />
          </svg>
        </TaskIcon>
      </div>
      <div className="flex items-center justify-end pr-[29px]">
        <ChevronUp size={22} />
        <div className="ml-[29px] w-[34px] text-center leading-[23px]">ENG<br />IN</div>
        <Wifi size={26} className="ml-[27px]" />
        <svg viewBox="0 0 26 22" className="ml-[10px] h-[22px] w-[26px]" fill="none" stroke="#fff" strokeWidth="1.800" strokeLinejoin="round">
          <path d="M1 8h4l6-6v18l-6-6H1zM14 8q2 3 0 6M17 5q5 6 0 12" />
          <path d="M20 2q7 9 0 18" stroke="#5a5a5a" />
        </svg>
        <svg viewBox="0 0 31 22" className="ml-[10px] h-[22px] w-[31px]">
          <rect x="1" y="5" width="26" height="14" rx="4" fill="none" stroke="#fff" strokeWidth="1.800" />
          <rect x="3.500" y="7.500" width="21" height="9" rx="2" fill="#9bd79b" />
          <path d="M29 9v6" stroke="#fff" strokeWidth="2.500" />
          <path d="M17 0l-7 8h4l-2 7 8-9h-5z" fill="#fff" stroke="#1c1c1c" />
        </svg>
        <span className="ml-1 text-[18px]">100%</span>
        <time className="ml-[23px] text-right whitespace-nowrap">10:09 PM<br />05/12/25</time>
      </div>
    </footer>
  );
}

export default function App() {
  return (
    <div className="flex h-screen flex-col overflow-hidden font-[Open_Sans]">
      <TabStrip />
      <AddressBar />
      <EditorHeader />
      <Toolbar />
      <Viewport />
      <Taskbar />
    </div>
  );
}
